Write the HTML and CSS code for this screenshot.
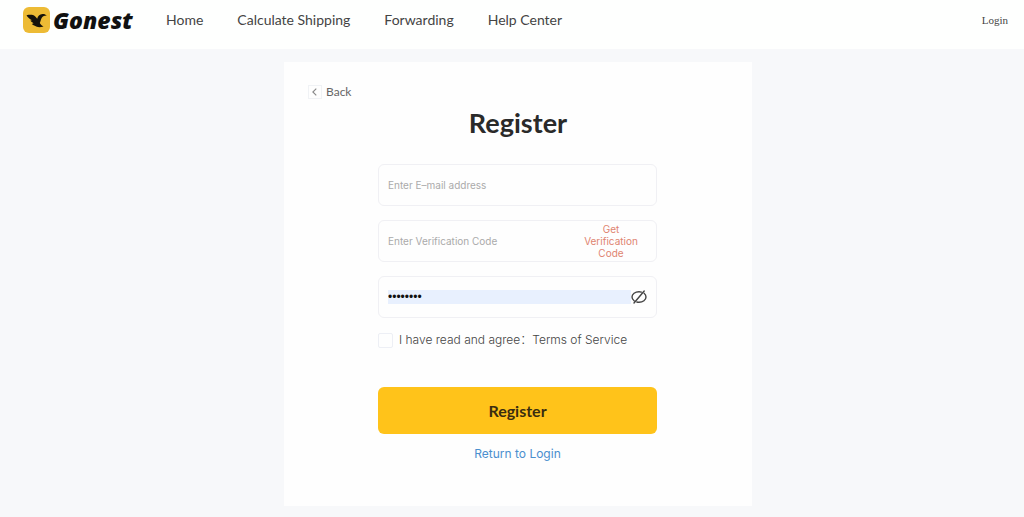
FILE: index.html
```
<!DOCTYPE html>
<html lang="en">
<head>
  <meta charset="UTF-8" />
  <meta name="viewport" content="width=device-width, initial-scale=1.0"/>
  <title>Gonest - Register</title>
  <link rel="stylesheet" href="styles.css">
</head>
<body>
  <header class="header">
    <a class="logo" href="#">
      <svg class="logo-icon" viewBox="0 0 27 26" aria-hidden="true">
        <rect width="27" height="26" rx="6" fill="#edbb35"/>
        <path d="M3.500 8.300C7 7.600 10 7.600 12 9.200C13 10 13.500 11 14.200 11.800C14.600 9 16.600 7.200 19.500 7C21.300 6.900 22.700 7.500 23.800 8.600C20.800 8.600 19.200 9.800 18.400 11.600C17.600 13.500 17.500 14.800 16.800 16C17.500 17.600 18.800 18.600 20.500 19.600C17 20.400 13.800 20.400 11.800 18.800C10.500 18.500 9.500 18 8.800 17.100L10.600 16.200C9.200 15.600 8 14.800 7.400 13.600L9 13.200C6.500 12 4.700 10.500 3.500 8.300Z" fill="#15120b"/>
      </svg>
      <span class="logo-text">Gonest</span>
    </a>
    <nav class="nav">
      <a href="#">Home</a>
      <a href="#">Calculate Shipping</a>
      <a href="#">Forwarding</a>
      <a href="#">Help Center</a>
    </nav>
    <a class="login-link" href="#">Login</a>
  </header>

  <main class="main">
    <div class="card">
      <a class="back" href="#">
        <span class="back-icon">
          <svg viewBox="0 0 14 14" aria-hidden="true"><path d="M8.500 3L4.500 7l4 4" fill="none" stroke="#888" stroke-width="1.300"/></svg>
        </span>
        Back
      </a>
      <h1>Register</h1>

      <form class="form">
        <div class="field">
          <input type="email" placeholder="Enter E–mail address" aria-label="E-mail address" />
        </div>
        <div class="field">
          <input type="text" placeholder="Enter Verification Code" aria-label="Verification Code" />
          <button class="get-code" type="button">Get Verification Code</button>
        </div>
        <div class="field">
          <input class="filled" type="password" value="password" aria-label="Password" />
          <button class="eye" type="button" aria-label="Show password">
            <svg viewBox="0 0 16 14" aria-hidden="true">
              <g fill="none" stroke="#444" stroke-width="1.400" stroke-linecap="round">
                <path d="M10.300 2.100C9.600 1.800 8.800 1.700 8 1.700C4.100 1.700 1 4 1 7C1 8.700 1.900 10 3.300 11"/>
                <path d="M13.100 3.300C14.300 4.200 15 5.500 15 7C15 10 11.900 12.300 8 12.300C7.200 12.300 6.500 12.200 5.800 12"/>
                <path d="M13.200 1L3 13"/>
              </g>
            </svg>
          </button>
        </div>

        <div class="agree">
          <input type="checkbox" id="agree" />
          <label for="agree">I have read and agree：</label>
          <a href="#">Terms of Service</a>
        </div>

        <button class="submit" type="submit">Register</button>
        <a class="return" href="#">Return to Login</a>
      </form>
    </div>
  </main>
</body>
</html>
```
FILE: styles.css
```
* {
  box-sizing: border-box;
}

body {
  margin: 0;
  background: #f7f8fa;
  color: #444;
  font-family: Inter, "Noto Sans CJK SC", sans-serif;
}

a {
  color: inherit;
  text-decoration: none;
}

button {
  padding: 0;
  border: none;
  background: none;
  font-family: inherit;
  cursor: pointer;
}

.header {
  display: flex;
  align-items: center;
  padding: 0 16px 9px 23px;
  height: 49px;
  background: #fefffe;
}

.logo {
  display: flex;
  align-items: center;
  gap: 3px;
  width: 143px;
}

.logo-icon {
  width: 27px;
  height: 26px;
}

.logo-text {
  color: #111;
  font: italic 800 23px/26px "Open Sans", sans-serif;
}

.nav {
  display: flex;
  gap: 34px;
  font: 14px/20px Lato, sans-serif;
}

.login-link {
  margin-left: auto;
  font: 11px/14px "Liberation Serif", serif;
}

.main {
  padding: 13px 0 12px 12px;
}

.card {
  width: 468px;
  margin: 0 auto;
  padding: 20px 24px 44px;
  background: #fefefe;
}

.back {
  display: inline-flex;
  align-items: center;
  gap: 4px;
  color: #666;
  font: 12px/16px Lato, sans-serif;
}

.back-icon {
  display: flex;
  width: 14px;
  height: 14px;
  border: 1px solid #f0f2f5;
}

.back-icon svg {
  width: 100%;
}

h1 {
  margin: 3px 0 23px;
  color: #2a2a2a;
  font: bold 27px/36px Lato, sans-serif;
  text-align: center;
}

.form {
  display: flex;
  flex-direction: column;
  gap: 14px;
  margin: 0 71px 0 70px;
}

.field {
  display: flex;
  align-items: center;
  height: 42px;
  padding: 0 9px;
  border: 1px solid #f0f0f4;
  border-radius: 6px;
}

.field input {
  flex: 1;
  min-width: 0;
  height: 14px;
  padding: 0;
  border: none;
  outline: none;
  background: none;
  color: #111;
  font: 10px/14px Inter, sans-serif;
}

.field input::placeholder {
  color: #aaa;
}

.field .filled {
  background: #e8f0fe;
  font: 12px/14px "Liberation Sans", sans-serif;
}

.get-code {
  width: 72px;
  padding: 0 8px;
  color: #df8470;
  font-size: 10px;
  line-height: 12px;
}

.eye {
  display: flex;
  width: 16px;
  height: 14px;
}

.agree {
  display: flex;
  align-items: center;
  height: 16px;
  font-size: 12px;
  font-weight: 300;
  line-height: 16px;
}

.agree input {
  appearance: none;
  width: 15px;
  height: 15px;
  margin: 0 6px 0 0;
  border: 1px solid #edeff5;
  border-radius: 2px;
}

.submit {
  height: 47px;
  margin-top: 25px;
  border-radius: 6px;
  background: #ffc31a;
  color: #3a2d10;
  font: bold 16px/20px Lato, sans-serif;
}

.return {
  align-self: center;
  margin-top: -2px;
  color: #4b8fce;
  font-size: 12px;
  line-height: 16px;
}
```
